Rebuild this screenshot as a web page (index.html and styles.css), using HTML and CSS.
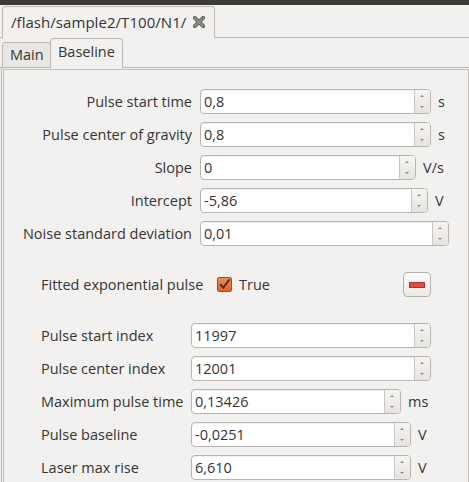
FILE: index.html
```html
<!DOCTYPE html>
<html>
<head>
<meta charset="utf-8">
<link rel="stylesheet" href="styles.css">
</head>
<body>
<div class="window">
  <div class="topbar"></div>
  <div class="doctabs">
    <div class="doctab"><span class="doctitle">/flash/sample2/T100/N1/</span><svg class="close" width="12" height="12" viewBox="0 0 12 12"><path d="M1.8 1.8 L10.2 10.2 M10.2 1.8 L1.8 10.2" stroke="#5e5c59" stroke-width="4" stroke-linecap="round"/><path d="M1.8 1.8 L10.2 10.2 M10.2 1.8 L1.8 10.2" stroke="#8c8a87" stroke-width="2.4" stroke-linecap="round"/></svg></div>
  </div>
  <div class="tabs">
    <div class="tab">Main</div>
    <div class="tab active">Baseline</div>
  </div>
  <div class="pane">
    <div class="scroll">
      <div class="form form-right">
        <div class="row">
          <div class="label">Pulse start time</div>
          <div class="spin w231"><div class="value">0,8</div><div class="arrows"><span class="up"></span><span class="down"></span></div></div>
          <div class="unit">s</div>
        </div>
        <div class="row">
          <div class="label">Pulse center of gravity</div>
          <div class="spin w231"><div class="value">0,8</div><div class="arrows"><span class="up"></span><span class="down"></span></div></div>
          <div class="unit">s</div>
        </div>
        <div class="row">
          <div class="label">Slope</div>
          <div class="spin w216"><div class="value">0</div><div class="arrows"><span class="up"></span><span class="down"></span></div></div>
          <div class="unit">V/s</div>
        </div>
        <div class="row">
          <div class="label">Intercept</div>
          <div class="spin w228"><div class="value">-5,86</div><div class="arrows"><span class="up"></span><span class="down"></span></div></div>
          <div class="unit">V</div>
        </div>
        <div class="row">
          <div class="label">Noise standard deviation</div>
          <div class="spin w249"><div class="value">0,01</div><div class="arrows"><span class="up"></span><span class="down"></span></div></div>
        </div>
      </div>

      <div class="checkrow">
        <div class="checklabel">Fitted exponential pulse</div>
        <div class="checkbox"><svg width="15" height="15" viewBox="0 0 15 15"><path d="M3.2 7.2 L6.2 10.6 L12.6 2.4" fill="none" stroke="#4a3326" stroke-width="2"/></svg></div>
        <div class="checktext">True</div>
        <div class="minusbtn"><span class="minusbar"></span></div>
      </div>

      <div class="form form-left">
        <div class="row">
          <div class="label">Pulse start index</div>
          <div class="spin w240"><div class="value">11997</div><div class="arrows"><span class="up"></span><span class="down"></span></div></div>
        </div>
        <div class="row">
          <div class="label">Pulse center index</div>
          <div class="spin w240"><div class="value">12001</div><div class="arrows"><span class="up"></span><span class="down"></span></div></div>
        </div>
        <div class="row">
          <div class="label">Maximum pulse time</div>
          <div class="spin w210"><div class="value">0,13426</div><div class="arrows"><span class="up"></span><span class="down"></span></div></div>
          <div class="unit">ms</div>
        </div>
        <div class="row">
          <div class="label">Pulse baseline</div>
          <div class="spin w220"><div class="value">-0,0251</div><div class="arrows"><span class="up"></span><span class="down"></span></div></div>
          <div class="unit">V</div>
        </div>
        <div class="row">
          <div class="label">Laser max rise</div>
          <div class="spin w220"><div class="value">6,610</div><div class="arrows"><span class="up"></span><span class="down"></span></div></div>
          <div class="unit">V</div>
        </div>
      </div>
    </div>
  </div>
</div>
</body>
</html>
```

FILE: styles.css
```css
html, body {
  margin: 0;
  padding: 0;
  overflow: hidden;
  background: #f2f1f0;
}
.window {
  width: 469px;
  height: 482px;
  overflow: hidden;
  font-family: "Open Sans", "DejaVu Sans", sans-serif;
  font-size: 14.5px;
  color: #353535;
  background: #f2f1f0;
}
.topbar {
  height: 5px;
  background: #3c3b37;
}
.doctabs {
  height: 32px;
  border-bottom: 1px solid #bcb9b4;
  display: flex;
  align-items: flex-end;
}
.doctab {
  margin-left: 2px;
  width: 213px;
  height: 32px;
  margin-bottom: -1px;
  border: 1px solid #bcb9b4;
  border-bottom: none;
  border-radius: 4px 4px 0 0;
  background: #f2f1f0;
  box-sizing: border-box;
  display: flex;
  align-items: center;
  padding-left: 8px;
}
.doctitle {
  line-height: 20px;
  margin-top: -2px;
  font-size: 15px;
  letter-spacing: 0.05px;
}
.close {
  margin-left: 7px;
  margin-top: -2px;
}
.tabs {
  height: 29px;
  border-bottom: 1px solid #bcb9b4;
  display: flex;
  align-items: flex-end;
  padding-left: 2px;
}
.tab {
  box-sizing: border-box;
  height: 25px;
  border: 1px solid #bcb9b4;
  border-bottom: none;
  border-radius: 4px 4px 0 0;
  background: #e9e7e4;
  padding: 2px 7px 0 7px;
  line-height: 20px;
  width: 49px;
}
.tab.active {
  width: 73px;
  height: 30px;
  margin-bottom: -1px;
  background: #f2f1f0;
  padding: 3px 7px 0 7px;
  margin-left: -1px;
}
.pane {
  margin-left: 1px;
  width: 470px;
  height: 420px;
  box-sizing: border-box;
  border-left: 1px solid #bcb9b4;
  border-right: 1px solid #bcb9b4;
  padding-top: 1px;
  padding-left: 1px;
}
.scroll {
  width: 466px;
  height: 420px;
  box-sizing: border-box;
  border: 1px solid #c4c1bc;
  border-bottom: none;
  padding-top: 19px;
}
.form {
  display: flex;
  flex-direction: column;
  gap: 8px;
}
.row {
  display: flex;
  align-items: center;
  height: 25px;
}
.form-right .label {
  width: 188px;
  text-align: right;
  margin-right: 8px;
}
.form-left {
  padding-left: 37px;
}
.form-left .label {
  width: 150px;
}
.spin {
  box-sizing: border-box;
  height: 25px;
  border: 1px solid #b8b5b0;
  border-radius: 4px;
  background: #ffffff;
  display: flex;
  overflow: hidden;
  box-shadow: inset 0 1px 1px rgba(0,0,0,0.06);
}
.w231 { width: 231px; }
.w216 { width: 216px; }
.w228 { width: 228px; }
.w249 { width: 249px; }
.w240 { width: 240px; }
.w210 { width: 210px; }
.w220 { width: 220px; }
.value {
  flex: 1;
  padding-left: 3px;
  line-height: 23px;
}
.arrows {
  width: 15px;
  border-left: 1px solid #c9c6c1;
  background: linear-gradient(#f6f5f4, #e6e4e1);
  position: relative;
}
.arrows .up, .arrows .down {
  position: absolute;
  left: 5px;
  width: 0;
  height: 0;
  border-left: 2px solid transparent;
  border-right: 2px solid transparent;
}
.arrows .up {
  top: 5px;
  border-bottom: 2px solid #8e8b87;
}
.arrows .down {
  bottom: 5px;
  border-top: 2px solid #8e8b87;
}
.unit {
  margin-left: 7px;
}
.checkrow {
  display: flex;
  align-items: center;
  height: 25px;
  margin-top: 26px;
  margin-bottom: 26px;
  padding-left: 37px;
}
.checklabel {
  width: 176px;
}
.checkbox {
  width: 15px;
  height: 15px;
  box-sizing: border-box;
  border: 1px solid #a84c1d;
  border-radius: 2px;
  background: linear-gradient(#f08c55, #e0662c);
  position: relative;
}
.checkbox svg {
  position: absolute;
  left: -1px;
  top: -1px;
}
.checktext {
  margin-left: 7px;
  width: 164px;
}
.minusbtn {
  box-sizing: border-box;
  width: 28px;
  height: 25px;
  border: 1px solid #b5b1ab;
  border-radius: 4px;
  background: linear-gradient(#fbfafa, #eceae8);
  display: flex;
  align-items: center;
  justify-content: center;
}
.minusbar {
  width: 16px;
  height: 6px;
  box-sizing: border-box;
  background: #e04a46;
  border: 1px solid #b8302d;
}
```
